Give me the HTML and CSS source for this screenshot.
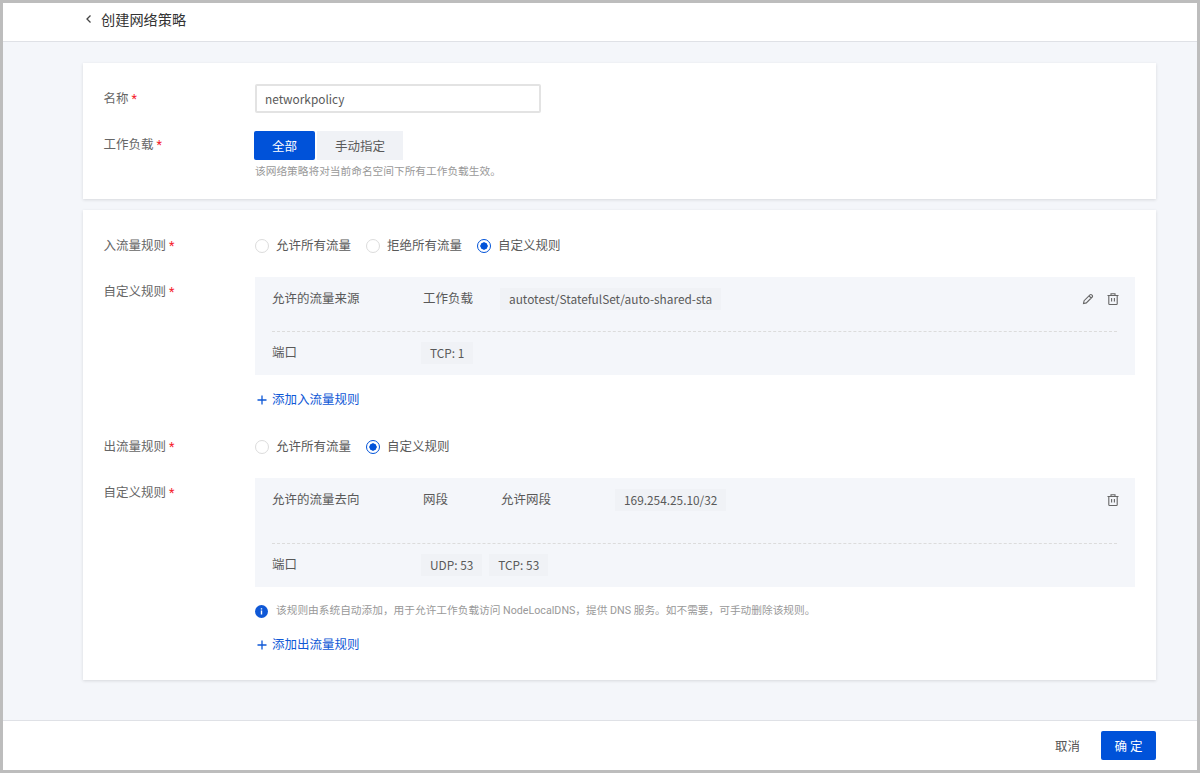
FILE: index.html
```html
<!DOCTYPE html>
<html lang="zh-CN">
<head>
    <meta charset="UTF-8">
    <title>创建网络策略</title>
    <link rel="stylesheet" href="styles.css">
</head>
<body>
    <div class="frame">
        <header class="top-bar">
            <svg class="back-icon" width="8" height="10" viewBox="0 0 8 10"><path d="M5.5 1.5L2 5l3.5 3.5" fill="none" stroke="#444" stroke-width="1.3"/></svg>
            <span class="page-title">创建网络策略</span>
        </header>

        <main class="content">
            <section class="card card-basic">
                <div class="form-row row-name">
                    <label class="form-label">名称 <i class="req">*</i></label>
                    <input class="text-input" type="text" value="networkpolicy">
                </div>
                <div class="form-row row-workload">
                    <label class="form-label">工作负载 <i class="req">*</i></label>
                    <div>
                        <div class="switch">
                            <button class="switch-btn active">全部</button>
                            <button class="switch-btn">手动指定</button>
                        </div>
                        <p class="hint">该网络策略将对当前命名空间下所有工作负载生效。</p>
                    </div>
                </div>
            </section>

            <section class="card card-rules">
                <div class="form-row row-radio">
                    <label class="form-label">入流量规则 <i class="req">*</i></label>
                    <div class="radio-group">
                        <span class="radio"><i class="dot"></i>允许所有流量</span>
                        <span class="radio"><i class="dot"></i>拒绝所有流量</span>
                        <span class="radio checked"><i class="dot"></i>自定义规则</span>
                    </div>
                </div>
                <div class="form-row row-rule">
                    <label class="form-label label-rule">自定义规则 <i class="req">*</i></label>
                    <div class="field">
                        <div class="rule-box">
                            <div class="rule-row rule-top">
                                <span class="rule-name">允许的流量来源</span>
                                <span class="rule-kind">工作负载</span>
                                <span class="tag">autotest/StatefulSet/auto-shared-sta</span>
                                <span class="rule-actions">
                                    <svg width="14" height="14" viewBox="0 0 14 14"><path d="M2.5 11.5l.6-2.8 5.9-5.9a1.2 1.2 0 0 1 1.7 0l.5.5a1.2 1.2 0 0 1 0 1.7l-5.9 5.9zM8 3.8l2.2 2.2" fill="none" stroke="#666" stroke-width="1.1"/></svg>
                                    <svg width="14" height="14" viewBox="0 0 14 14"><path d="M1.5 3.5h11M5 3.5V1.8h4v1.7M2.8 3.5v8.2c0 .5.4.8.8.8h6.8c.4 0 .8-.3.8-.8V3.5M5.6 6v3.5M8.4 6v3.5" fill="none" stroke="#666" stroke-width="1.1"/></svg>
                                </span>
                            </div>
                            <div class="rule-row rule-bottom">
                                <span class="rule-name">端口</span>
                                <span class="tag">TCP: 1</span>
                            </div>
                        </div>
                        <a class="add-link link-in"><svg width="10" height="10" viewBox="0 0 10 10"><path d="M5 .5v9M.5 5h9" stroke="#0f58d6" stroke-width="1.3"/></svg>添加入流量规则</a>
                    </div>
                </div>
                <div class="form-row row-radio row-out">
                    <label class="form-label">出流量规则 <i class="req">*</i></label>
                    <div class="radio-group">
                        <span class="radio"><i class="dot"></i>允许所有流量</span>
                        <span class="radio checked"><i class="dot"></i>自定义规则</span>
                    </div>
                </div>
                <div class="form-row row-rule">
                    <label class="form-label label-rule">自定义规则 <i class="req">*</i></label>
                    <div class="field">
                        <div class="rule-box">
                            <div class="rule-row rule-top tall">
                                <span class="rule-name">允许的流量去向</span>
                                <span class="rule-kind">网段</span>
                                <span class="rule-sub">允许网段</span>
                                <span class="tag">169.254.25.10/32</span>
                                <span class="rule-actions">
                                    <svg width="14" height="14" viewBox="0 0 14 14"><path d="M1.5 3.5h11M5 3.5V1.8h4v1.7M2.8 3.5v8.2c0 .5.4.8.8.8h6.8c.4 0 .8-.3.8-.8V3.5M5.6 6v3.5M8.4 6v3.5" fill="none" stroke="#666" stroke-width="1.1"/></svg>
                                </span>
                            </div>
                            <div class="rule-row rule-bottom">
                                <span class="rule-name">端口</span>
                                <span class="tag">UDP: 53</span>
                                <span class="tag">TCP: 53</span>
                            </div>
                        </div>
                        <p class="notice">
                            <svg width="13" height="13" viewBox="0 0 13 13"><circle cx="6.5" cy="6.5" r="6.5" fill="#0f58d6"/><path d="M6.5 5.6v4M6.5 3.2v1.3" stroke="#fff" stroke-width="1.4"/></svg>
                            <span>该规则由系统自动添加，用于允许工作负载访问 NodeLocalDNS，提供 DNS 服务。如不需要，可手动删除该规则。</span>
                        </p>
                        <a class="add-link link-out"><svg width="10" height="10" viewBox="0 0 10 10"><path d="M5 .5v9M.5 5h9" stroke="#0f58d6" stroke-width="1.3"/></svg>添加出流量规则</a>
                    </div>
                </div>
            </section>
        </main>

        <footer class="bottom-bar">
            <button class="btn-text">取消</button>
            <button class="btn-primary">确 定</button>
        </footer>
    </div>
</body>
</html>
```

FILE: styles.css
```css
* {
    box-sizing: border-box;
}

html, body {
    margin: 0;
    padding: 0;
}

body {
    font-family: Roboto, "Noto Sans CJK SC", sans-serif;
    font-size: 12.5px;
    color: #595959;
}

.frame {
    width: 1200px;
    height: 773px;
    border: 3px solid #bdbdbd;
    display: flex;
    flex-direction: column;
    background-color: #f4f6fa;
}

.top-bar {
    height: 39px;
    flex: none;
    background-color: #fff;
    border-bottom: 1px solid #dfe1e6;
    padding: 0 0 6px 82px;
    display: flex;
    align-items: center;
    gap: 8px;
}

.page-title {
    font-size: 14.2px;
    color: #333;
}

.content {
    flex: 1;
    padding: 21px 41px 0 80px;
}

.card {
    background-color: #fff;
    box-shadow: 0 1px 3px rgba(0, 0, 0, 0.12);
    padding: 0 21px;
}

.card-basic {
    height: 136px;
    padding-top: 21px;
    margin-bottom: 11px;
}

.card-rules {
    height: 470px;
    padding-top: 24px;
}

.form-row {
    display: flex;
}

.form-label {
    width: 151.5px;
    margin-left: -0.5px;
    flex: none;
    line-height: 28px;
    color: #666;
}

.row-name .form-label {
    line-height: 29px;
}

.req {
    color: #f5222d;
    font-style: normal;
}

.row-name {
    margin-bottom: 18px;
}

.text-input {
    width: 286px;
    height: 29px;
    border: 2px solid #e3e3e3;
    border-radius: 2px;
    padding: 0 8px;
    font-family: "Noto Sans CJK SC", sans-serif;
    font-size: 11.85px;
    color: #595959;
    outline: none;
}

.switch {
    display: flex;
    gap: 2px;
    margin-left: -1px;
}

.switch-btn {
    height: 29px;
    border: none;
    padding: 0;
    font: inherit;
    color: #595959;
    background-color: #f0f2f6;
    width: 86px;
}

.switch-btn.active {
    width: 61px;
    color: #fff;
    background-color: #0052d9;
    border-radius: 2px;
}

.hint {
    margin: 3px 0 0;
    font-size: 10.7px;
    line-height: 18px;
    color: #999;
}

.row-radio {
    height: 23px;
    align-items: center;
}

.row-radio .form-label {
    line-height: 23px;
}

.row-out {
    margin-bottom: 1px;
}

.radio-group {
    display: flex;
    gap: 15px;
}

.radio {
    display: flex;
    align-items: center;
    gap: 7px;
    line-height: 23px;
}

.dot {
    width: 14px;
    height: 14px;
    border: 1px solid #dcdcdc;
    border-radius: 50%;
    flex: none;
}

.radio.checked .dot {
    border-color: #0052d9;
    border-width: 1.5px;
    background: radial-gradient(circle, #0052d9 0 3.4px, #fff 3.9px);
}

.row-rule {
    margin-top: 20px;
}

.label-rule {
    line-height: 29px;
}

.field {
    flex: 1;
}

.rule-box {
    background-color: #f4f6fa;
    padding: 11px 18px 11px 17px;
}

.rule-row {
    display: flex;
    align-items: flex-start;
    gap: 7px;
}

.rule-top {
    height: 44px;
    border-bottom: 1px dashed #dcdcdc;
    margin-bottom: 10px;
}

.rule-top.tall {
    height: 55px;
}

.rule-name {
    width: 144px;
    flex: none;
    line-height: 22px;
}

.rule-bottom .rule-name {
    width: 142px;
}

.rule-kind {
    width: 70px;
    flex: none;
    line-height: 22px;
}

.rule-sub {
    width: 107px;
    margin-left: 1px;
    flex: none;
    line-height: 22px;
}

.tag {
    height: 22px;
    line-height: 22px;
    padding: 0 9px;
    background-color: #f0f2f6;
    color: #595959;
    font-family: "Noto Sans CJK SC", sans-serif;
    font-size: 11.85px;
}

.rule-actions {
    margin-left: auto;
    display: flex;
    gap: 11px;
    padding-top: 4px;
    margin-right: -3px;
}

.add-link {
    display: flex;
    align-items: center;
    gap: 5px;
    color: #0f58d6;
    line-height: 18px;
    padding-left: 2px;
}

.link-in {
    margin-top: 16px;
    margin-bottom: 26px;
}

.notice {
    margin: 15px 0 0;
    font-size: 10.7px;
    line-height: 18px;
    color: #999;
    display: flex;
    align-items: center;
    gap: 8px;
}

.link-out {
    margin-top: 16px;
}

.bottom-bar {
    height: 50px;
    flex: none;
    background-color: #fff;
    border-top: 1px solid #dfe1e6;
    display: flex;
    align-items: center;
    justify-content: flex-end;
    padding-right: 41px;
    gap: 21px;
}

.btn-text {
    border: none;
    background: none;
    padding: 0;
    font: inherit;
    color: #555;
}

.btn-primary {
    width: 55px;
    height: 29px;
    border: none;
    border-radius: 2px;
    background-color: #0052d9;
    color: #fff;
    font: inherit;
}
```
